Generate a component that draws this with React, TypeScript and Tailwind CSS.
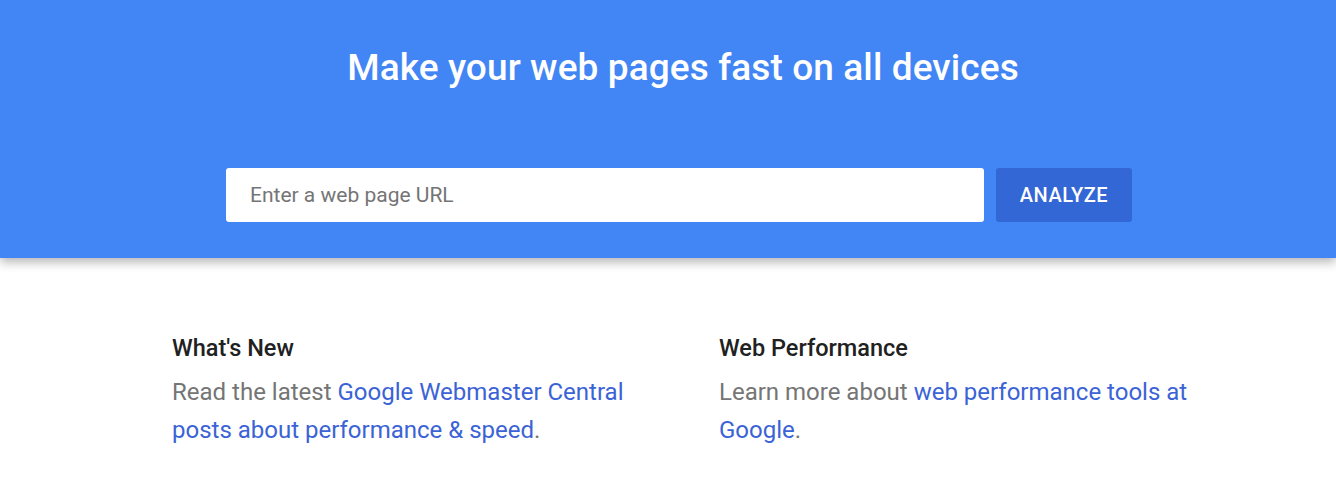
export default function App() {
  return (
    <div className="min-h-[486px] bg-white font-['Roboto',sans-serif]">
      {/* Hero */}
      <header className="relative z-10 h-[258px] bg-[#4285f4] shadow-[0_4px_10px_rgba(0,0,0,0.3)]">
        <div className="flex flex-col items-center pl-[22px] pt-[44px]">
          <h1 className="pl-[8px] text-[37px] leading-[48px] font-medium text-white tracking-[0.1px]">
            Make your web pages fast on all devices
          </h1>
          <form className="mt-[76px] flex gap-[12px]">
            <input
              type="text"
              placeholder="Enter a web page URL"
              className="h-[54px] w-[758px] rounded-[3px] bg-white px-[24px] text-[21px] text-[#212121] placeholder:text-[#757575] outline-none"
            />
            <button
              type="button"
              className="h-[54px] w-[136px] rounded-[3px] bg-[#3367d6] text-[20px] font-medium tracking-[0.5px] text-white"
            >
              ANALYZE
            </button>
          </form>
        </div>
      </header>

      {/* Info columns */}
      <section className="grid grid-cols-[499px_499px] gap-x-[48px] pl-[172px] pt-[75px]">
        <div>
          <h2 className="text-[23.5px] leading-[30px] font-medium text-[#212121]">What's New</h2>
          <p className="mt-[10px] text-[24px] leading-[38px] text-[#757575]">
            Read the latest{" "}
            <a href="#" className="text-[#3b63d6]">
              Google Webmaster Central posts about performance &amp; speed
            </a>
            .
          </p>
        </div>
        <div>
          <h2 className="text-[23.5px] leading-[30px] font-medium text-[#212121]">Web Performance</h2>
          <p className="mt-[10px] text-[24px] leading-[38px] text-[#757575]">
            Learn more about{" "}
            <a href="#" className="text-[#3b63d6]">
              web performance tools at Google
            </a>
            .
          </p>
        </div>
      </section>
    </div>
  );
}
